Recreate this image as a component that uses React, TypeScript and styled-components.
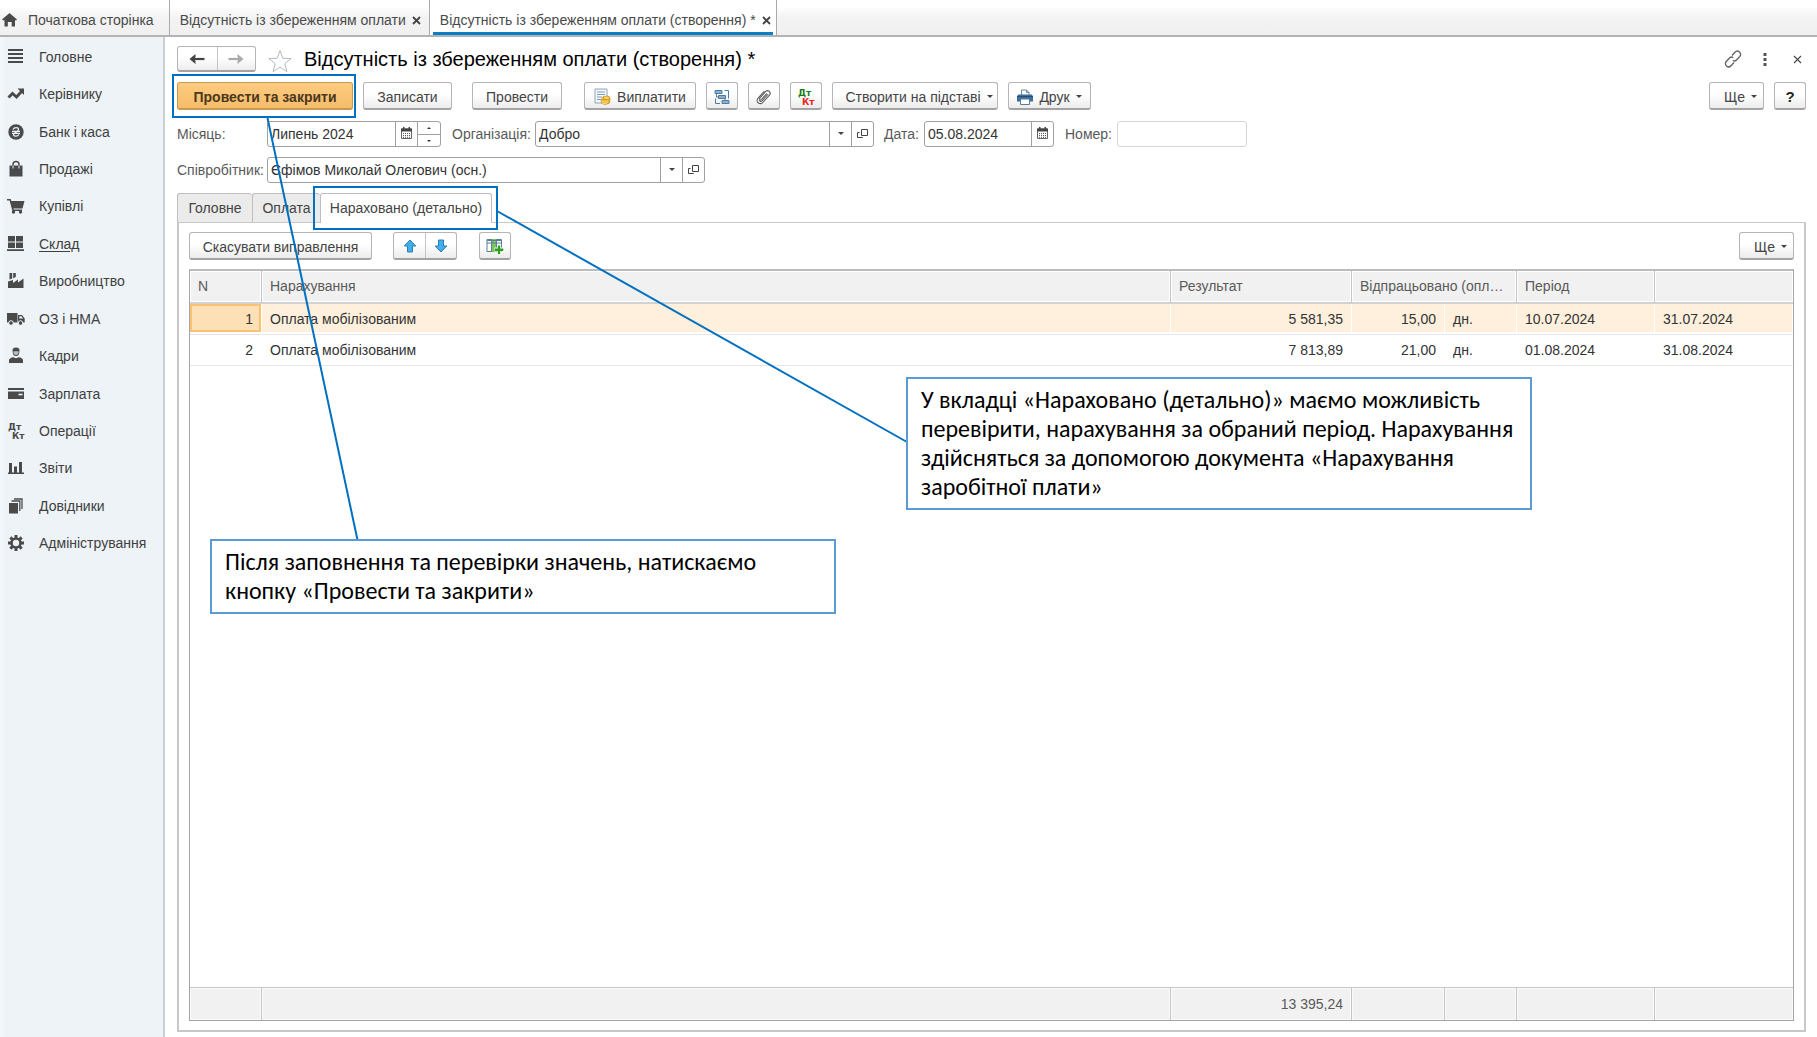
import React from 'react';
import styled, { createGlobalStyle, css } from 'styled-components';

const Global = createGlobalStyle`
  *, *::before, *::after { box-sizing: border-box; }
  body { margin: 0; background: #fff; }
  body, button, input { font-family: "Liberation Sans", Arial, sans-serif; font-size: 14px; color: #333; }
  button { margin: 0; padding: 0; cursor: pointer; }
  svg { display: block; flex: none; }
`;

const Page = styled.div`
  position: relative;
  display: flex;
  flex-direction: column;
  height: 100vh;
  min-height: 700px;
  overflow: hidden;
`;

/* ---------- window tabs ---------- */

const TabBar = styled.nav`
  display: flex;
  flex: none;
  height: 37px;
  border-bottom: 2px solid #b3b3b3;
  background: linear-gradient(#fff 6px, #f3f3f3 18px, #f0f0f0);
`;

const WindowTab = styled.div<{ $active?: boolean }>`
  display: flex;
  align-items: center;
  gap: 6px;
  padding: 5px 7px 0 10px;
  border-right: 1px solid #aaa;
  ${p => p.$active && css`
    padding-right: 4px;
    background: #fff;
    box-shadow: inset 3px 0 #fff, inset -3px 0 #fff, inset 0 -3px #0a7fc5;
  `}
`;

const HomeTab = styled(WindowTab)`
  gap: 10px;
  padding: 5px 15px 0 2px;
`;

const TabLink = styled.a`
  color: #4a4a4a;
  text-decoration: none;
  white-space: nowrap;
`;

const PlainButton = styled.button`
  display: grid;
  place-items: center;
  min-width: 10px;
  height: 20px;
  border: 0;
  background: none;
`;

/* ---------- sidebar ---------- */

const Body = styled.div`
  display: flex;
  flex: 1;
  min-height: 0;
`;

const Sidebar = styled.nav`
  flex: none;
  width: 165px;
  border-right: 2px solid #c9cfd3;
  background: linear-gradient(90deg, #f4f8fa, #edf3f7 6px);
`;

const Menu = styled.ul`
  display: grid;
  grid-auto-rows: 1fr;
  height: 525px;
  margin: 0;
  padding: 1px 0 0;
  list-style: none;
`;

const MenuLink = styled.a<{ $current?: boolean }>`
  display: flex;
  align-items: center;
  gap: 14px;
  height: 100%;
  padding-left: 7px;
  color: #404040;
  text-decoration: ${p => (p.$current ? 'underline' : 'none')};
  text-underline-offset: 2px;
`;

/* ---------- document form ---------- */

const Main = styled.main`
  display: flex;
  flex: 1;
  flex-direction: column;
  min-width: 0;
  padding: 9px 11px 5px 12px;
`;

const TitleRow = styled.header`
  display: flex;
  align-items: center;
  height: 26px;
`;

const Title = styled.h1`
  flex: 1;
  margin: 0 0 0 11px;
  color: #000;
  font-size: 20px;
  font-weight: 400;
  line-height: 26px;
`;

const HeaderTools = styled.div`
  display: grid;
  grid-template-columns: repeat(3, 18px);
  gap: 14px;
`;

const raised = css`
  border: 1px solid #b5b5b5;
  border-bottom: 2px solid #a3a3a3;
  border-radius: 3px;
  background: linear-gradient(#fff 45%, #ececec);
`;

const Button = styled.button<{ $primary?: boolean; $menu?: boolean; $width?: number; $before?: number }>`
  ${raised}
  display: flex;
  flex: none;
  align-items: center;
  justify-content: center;
  gap: 6px;
  width: ${p => p.$width ?? 32}px;
  height: 28px;
  margin-left: ${p => p.$before ?? 0}px;
  padding: 2px 0 0 ${p => (p.$menu ? 8 : 0)}px;
  color: #444;
  white-space: nowrap;
  ${p => p.$primary && css`
    border-color: #c79a52;
    background: linear-gradient(#fdcb80, #f6bd6a);
    color: #4a3820;
    font-weight: 700;
  `}
`;

const ButtonPair = styled.div<{ $before?: number; $height?: number }>`
  ${raised}
  display: grid;
  flex: none;
  grid-template-columns: 1fr 1fr;
  width: ${p => (p.$before ? 64 : 79)}px;
  height: ${p => p.$height ?? 28}px;
  margin-left: ${p => p.$before ?? 0}px;
  margin-right: ${p => (p.$before ? 0 : 11)}px;
`;

const HalfButton = styled.button`
  display: grid;
  place-items: center;
  border: 0;
  background: none;
  & + & { border-left: 1px solid #c4c4c4; }
`;

const Toolbar = styled.div`
  display: flex;
  align-items: center;
  gap: 10px;
  height: 28px;
  margin-top: 10px;
`;

const Spacer = styled.span`
  flex: 1;
`;

const HelpMark = styled.b`
  color: #222;
  font-size: 15px;
`;

const Caret = styled.span`
  width: 0;
  height: 0;
  border: 3px solid transparent;
  border-top-color: #444;
  border-bottom: 0;
`;

const FieldRow = styled.div<{ $top: number }>`
  display: flex;
  align-items: center;
  margin-top: ${p => p.$top}px;
`;

const Label = styled.label<{ $width: number }>`
  flex: none;
  width: ${p => p.$width}px;
  color: #595959;
  white-space: nowrap;
`;

const Field = styled.div<{ $width: number; $after?: number; $pale?: boolean }>`
  display: flex;
  flex: none;
  width: ${p => p.$width}px;
  height: 26px;
  margin-right: ${p => p.$after ?? 0}px;
  overflow: hidden;
  border: 1px solid ${p => (p.$pale ? '#d6d6d6' : '#a0a0a0')};
  border-radius: 3px;
  background: #fff;
`;

const TextInput = styled.input`
  flex: 1;
  min-width: 0;
  padding: 0 3px;
  border: 0;
  outline: 0;
  background: none;
`;

const FieldButton = styled.button`
  display: grid;
  flex: none;
  place-items: center;
  width: 22px;
  padding-bottom: 2px;
  border: 0;
  border-left: 1px solid #a0a0a0;
  background: none;
`;

const Spinner = styled.div`
  display: grid;
  grid-template-rows: 1fr 1fr;
  width: 23px;
  border-left: 1px solid #a0a0a0;
`;

const SpinButton = styled.button`
  display: grid;
  place-items: center;
  border: 0;
  background: none;
  & + & { border-top: 1px solid #a0a0a0; }
`;

/* ---------- page tabs and grid ---------- */

const Tabs = styled.div`
  display: flex;
  height: 29px;
  margin-top: 10px;
`;

const Tab = styled.button<{ $active?: boolean; $width: number }>`
  z-index: 1;
  width: ${p => p.$width}px;
  height: ${p => (p.$active ? 30 : 29)}px;
  padding-bottom: ${p => (p.$active ? 2 : 0)}px;
  border: 1px solid #bdbdbd;
  border-right-width: ${p => (p.$active ? 1 : 0)}px;
  border-bottom: 0;
  border-radius: 3px 3px 0 0;
  background: ${p => (p.$active ? '#fff' : '#ebebeb')};
  color: #444;
`;

const Panel = styled.section`
  display: flex;
  flex: 1;
  flex-direction: column;
  min-height: 0;
  padding: 9px 10px;
  border: 2px solid #c8c8c8;
  border-top-width: 1px;
`;

const PanelTools = styled.div`
  display: flex;
  align-items: center;
  flex: none;
`;

const GridBox = styled.div`
  flex: 1;
  min-height: 0;
  margin-top: 9px;
  border: 1px solid #a5a5a5;
  border-top: 2px solid #bcbcbc;
`;

const Grid = styled.table`
  width: 100%;
  height: 100%;
  border-spacing: 0;
  table-layout: fixed;
`;

const Head = styled.th`
  height: 33px;
  padding: 0 8px 2px;
  border-right: 1px solid #c6c6c6;
  border-bottom: 2px solid #d2d2d2;
  background: #f1f1f1;
  box-shadow: inset 0 0 0 1px #fff;
  color: #5a5a5a;
  font-weight: 400;
  text-align: left;
  white-space: nowrap;
  &:last-child { border-right: 0; }
`;

const Row = styled.tr<{ $selected?: boolean }>`
  background: ${p => (p.$selected ? '#fff0de' : '#fff')};
`;

const Cell = styled.td<{ $right?: boolean; $focus?: boolean }>`
  height: 31px;
  padding: 0 8px;
  border-right: 1px solid #fff;
  border-bottom: 1px solid #e6e6e6;
  box-shadow: inset 0 -2px #fff;
  text-align: ${p => (p.$right ? 'right' : 'left')};
  white-space: nowrap;
  ${p => p.$focus && css`
    background: #fde0b6;
    box-shadow: inset 0 -2px #fff, inset 0 -4px #f8c272, inset 0 0 0 2px #f8c272;
  `}
`;

const Filler = styled.td`
  padding: 0;
`;

const Foot = styled.td`
  height: 33px;
  padding: 0 8px;
  border-top: 1px solid #c6c6c6;
  border-right: 1px solid #c6c6c6;
  background: #f1f1f1;
  box-shadow: inset 0 0 0 1px #fafafa;
  color: #5a5a5a;
  text-align: right;
  &:last-child { border-right: 0; }
`;

/* ---------- annotations over the form ---------- */

const Lines = styled.svg`
  position: absolute;
  top: 0;
  left: 0;
  z-index: 2;
  pointer-events: none;
`;

const Frame = styled.div<{ $x: number; $y: number; $w: number; $h: number }>`
  position: absolute;
  z-index: 2;
  top: ${p => p.$y}px;
  left: ${p => p.$x}px;
  width: ${p => p.$w}px;
  height: ${p => p.$h}px;
  border: 2px solid #0070c0;
  pointer-events: none;
`;

const Callout = styled.p<{ $x: number; $y: number }>`
  position: absolute;
  z-index: 2;
  top: ${p => p.$y}px;
  left: ${p => p.$x}px;
  width: 626px;
  margin: 0;
  padding: 6px 4px 7px 13px;
  border: 2px solid #5b9bd5;
  background: #fff;
  color: #000;
  font-family: Carlito, "Noto Sans", sans-serif;
  font-size: 24px;
  line-height: 29px;
`;

/* ---------- icons ---------- */

const Ico = ({ children, size = 18, box = 18 }: { children: React.ReactNode; size?: number; box?: number }) => (
  <svg width={size} height={size} viewBox={`0 0 ${box} ${box}`} fill="#4a4a4a" aria-hidden="true">{children}</svg>
);

const DtKt = ({ top, bottom }: { top: string; bottom: string }) => (
  <svg width="18" height="18" viewBox="0 0 18 18" fontFamily="DejaVu Sans, sans-serif" fontWeight="700" fontSize="9" aria-hidden="true">
    <text x="1" y="8" fill={top}>Дт</text>
    <text x="5" y="17" fill={bottom}>Кт</text>
  </svg>
);

const icons: Record<string, React.ReactNode> = {
  menu: <Ico><path d="M1 1h15v2H1zM1 5h15v2H1zM1 9h15v2H1zM1 13h15v2H1z" /></Ico>,
  trend: <Ico><path d="M1.500 12.500l4-4 4 3.500 5-5.500" fill="none" stroke="#4a4a4a" strokeWidth="2.800" /><path d="M10.500 3.500H17V10z" /></Ico>,
  coin: <Ico><circle cx="9" cy="9" r="7.700" /><path d="M6 6.500c1-2.500 5.500-2.500 5.500 0S6.500 9.500 6.500 11.500s4 2.500 5.500 0M5 8.300h8M5 10.300h8" fill="none" stroke="#edf3f7" strokeWidth="1.200" /></Ico>,
  bag: <Ico><path d="M2.500 5.500h13v11h-13z" /><path d="M6 6V4.500a3 3 0 0 1 6 0V6" fill="none" stroke="#4a4a4a" strokeWidth="1.500" /><path d="M6 5.500v3M12 5.500v3" stroke="#edf3f7" /></Ico>,
  cart: <Ico><path d="M0 2h3.700l.6 2H17.500l-2 7.500H6.400l.3 1H15v1.500H5.400L2.600 3.500H0z" /><circle cx="6.500" cy="15" r="1.700" /><circle cx="13.500" cy="15" r="1.700" /></Ico>,
  grid: <Ico><path d="M1 1h7v5.500H1zM9 1h7v5.500H9zM1 7.500h7V13H1zM9 7.500h7V13H9zM0 14.300h17V16H0z" /></Ico>,
  factory: <Ico><path d="M1 16V9.500L6 8v3l5-3.500v3l5.500-4V16zM2.500 1h2.700v5.500L2.500 7.500zM6.200 1h2.600v4L6.200 6.200z" /></Ico>,
  truck: <Ico><path d="M0 3h10.500v9.500H0zM11 5h4l2.700 3.500v4H11z" /><circle cx="4" cy="13" r="2.300" stroke="#edf3f7" /><circle cx="13.500" cy="13" r="2.300" stroke="#edf3f7" /><path d="M12.300 6.200h2.200l1.500 2.300h-3.700z" fill="#edf3f7" /></Ico>,
  person: <Ico><path d="M5.500 3.500a3.500 3 0 0 1 7 0l-.3 2a3.200 3.500 0 0 1-6.400 0zM2 16v-2.500c0-2 2-3 4.500-3.200l2.500 1 2.500-1c2.500.2 4.500 1.200 4.500 3.200V16z" /><path d="M6.500 4.300h5v1a2.500 2.700 0 0 1-5 0z" fill="#b9bdc0" /></Ico>,
  card: <Ico><path d="M1 3h16v2H1zM1 6.500h16V14H1z" /><path d="M11.500 9.500h4" stroke="#edf3f7" strokeWidth="1.600" /></Ico>,
  dtkt: <DtKt top="#4a4a4a" bottom="#4a4a4a" />,
  chart: <Ico><path d="M1 13.500h16V15H1zM2 4h3v10H2zM7 7.500h3v6.500H7zM12 3h3v11h-3z" /></Ico>,
  books: <Ico><path d="M2 6h9v10.500H2z" /><path d="M4.500 4h8.300v10M7 2h8v10" fill="none" stroke="#4a4a4a" strokeWidth="1.300" /></Ico>,
  gear: (
    <Ico>
      <circle cx="9" cy="9" r="4.500" fill="none" stroke="#4a4a4a" strokeWidth="2.600" />
      {[0, 45, 90, 135, 180, 225, 270, 315].map(a => <path key={a} d="M7.500 1h3v3h-3z" transform={`rotate(${a} 9 9)`} />)}
    </Ico>
  ),
};

const Home = () => <Ico size={16} box={16}><path d="M7.500 1l7.500 6.500-1 1L13 8v6.500H9.700V10H5.800v4.500H2.500V8l-1 .5L0 7.500z" /></Ico>;
const Cross = ({ thin }: { thin?: boolean }) => (
  <svg width="9" height="9" viewBox="0 0 9 9" stroke="#444" strokeWidth={thin ? 1.1 : 1.8} aria-hidden="true"><path d="M1 1l7 7M8 1l-7 7" /></svg>
);
const Arrow = ({ flip, color }: { flip?: boolean; color: string }) => (
  <svg width="16" height="12" viewBox="0 0 16 12" aria-hidden="true">
    <g transform={flip ? 'rotate(180 8 6)' : undefined}><path d="M15.500 6H4" stroke={color} strokeWidth="2.200" /><path d="M.5 6L6.500 1v3L5 6l1.500 2v3z" fill={color} /></g>
  </svg>
);
const Star = () => (
  <svg width="26" height="24" viewBox="0 0 26 24" fill="#fff" stroke="#b4bac2" aria-hidden="true"><path d="M13 1.500l2.900 7.800 8.300.3-6.500 5.100 2.300 8-7-4.600-7 4.600 2.300-8L1.800 9.600l8.300-.3z" /></svg>
);
const Link = () => (
  <svg width="18" height="18" viewBox="0 0 18 18" fill="none" stroke="#666" strokeWidth="1.400" aria-hidden="true">
    <path d="M8 5.500l3-3.200a3.100 3.100 0 0 1 4.800 4.200L12.500 10a2.700 2.700 0 0 1-3.700.2M10 12.500l-3 3.200a3.100 3.100 0 0 1-4.800-4.200L5.500 8a2.700 2.700 0 0 1 3.700-.2" />
  </svg>
);
const Dots = () => <svg width="4" height="13" viewBox="0 0 4 13" fill="#555" aria-hidden="true"><path d="M.5 0h3v3h-3zM.5 5h3v3h-3zM.5 10h3v3h-3z" /></svg>;
const Calendar = () => (
  <svg width="11" height="12" viewBox="0 0 11 12" aria-hidden="true">
    <path d="M.5 2h10v9.500H.5z" fill="#fff" stroke="#666" /><path d="M0 1.500h11v3H0zM2 0h1.500v2H2zM7.500 0H9v2H7.500z" fill="#444" />
    <path d="M2 6.500h7M2 8.500h7M2 10.300h7" stroke="#555" strokeDasharray="1 1" />
  </svg>
);
const Open = () => <svg width="11" height="11" viewBox="0 0 11 11" fill="none" stroke="#444" aria-hidden="true"><path d="M4.500 1.500h6v6h-6zM2.500 4.500h-2v5h5V9" /></svg>;
const Tri = ({ up }: { up?: boolean }) => <svg width="4" height="2" viewBox="0 0 4 2" fill="#333" aria-hidden="true"><path d={up ? 'M2 0l2 2H0z' : 'M0 0h4L2 2z'} /></svg>;
const Pay = () => (
  <svg width="17" height="18" viewBox="0 0 17 18" aria-hidden="true">
    <path d="M1 1h12v14H1z" fill="#f4f8fb" stroke="#8ea5b8" /><path d="M3 4h8M3 6.500h8M3 9h5M3 11.500h4" stroke="#7f9db5" />
    <path d="M9.500 8.500h5.500l1 2-.5 4.500-4 1.500-4-1-.5-3.500z" fill="#eaae2c" stroke="#c58a1e" strokeWidth=".7" /><ellipse cx="12.500" cy="9.800" rx="3.200" ry="1.700" fill="#fbd661" stroke="#c58a1e" strokeWidth=".7" />
    <path d="M7.500 12.500c1 1.800 5 1.800 6.500 0M7.500 14.500c1 1.500 4.500 1.500 6 0" fill="none" stroke="#fbe08a" />
  </svg>
);
const Structure = () => (
  <svg width="16" height="16" viewBox="0 0 16 16" fill="#8fb0cc" stroke="#4a7ba3" aria-hidden="true">
    <path d="M1 1.500h7v3H1zM4.500 6.500h7v3h-7zM8 11.500h7v3H8z" /><path d="M10.500 1.500h4V9.500M2.500 5v3h2M11 9.500v2M1.500 9.500v5H6" fill="none" />
  </svg>
);
const Clip = () => (
  <svg width="16" height="16" viewBox="0 0 16 16" fill="none" stroke="#5a5a5a" strokeWidth="1.100" strokeLinecap="round" aria-hidden="true">
    <path d="M3.500 9.500l6-6.800a2.600 2.600 0 0 1 4 3.500L6.800 13.500a3.200 3.200 0 0 1-4.900-4.200L8 2.500M5 11l5.500-6.200M11.800 5.500L6 12a1.300 1.300 0 0 1-2-1.700" />
  </svg>
);
const Printer = () => (
  <svg width="16" height="16" viewBox="0 0 16 16" aria-hidden="true">
    <path d="M4.500 6V1h5l2.500 2.500V6" fill="#fff" stroke="#71869c" /><path d="M1.500 5.500h13L16 7v5.500H0V7z" fill="#3b6e9d" /><path d="M0 7.500h16" stroke="#244f79" />
    <path d="M3.500 10h9v5.500h-9z" fill="#fff" stroke="#5a7c9c" /><path d="M9.500 1v2.500H12" fill="none" stroke="#71869c" />
  </svg>
);
const BlueArrow = ({ down }: { down?: boolean }) => (
  <svg width="14" height="14" viewBox="0 0 14 14" fill="#43aeea" stroke="#2a7fb8" aria-hidden="true"><path transform={down ? 'rotate(180 7 7)' : undefined} d="M7 1l5.800 6H9.500v6h-5V7H1.200z" /></svg>
);
const AddColumn = () => (
  <svg width="18" height="17" viewBox="0 0 18 17" aria-hidden="true">
    <path d="M1 1.500h14.500v12H1z" fill="#fff" stroke="#5d7f96" /><path d="M6 1h4.500v13H6z" fill="#7ec35f" />
    <path d="M1 5h14.500M5.500 1.500v12M10.500 1.500v12M1 2.500h14.500" stroke="#5d7f96" fill="none" />
    <path d="M13 7v9M8.500 11.500h9" stroke="#fff" strokeWidth="4" /><path d="M13 7.500v8.500M8.800 11.700h8.500" stroke="#2f9e1f" strokeWidth="2.400" />
  </svg>
);

/* ---------- data ---------- */

const menu = [
  ['menu', 'Головне'], ['trend', 'Керівнику'], ['coin', 'Банк і каса'], ['bag', 'Продажі'], ['cart', 'Купівлі'],
  ['grid', 'Склад'], ['factory', 'Виробництво'], ['truck', 'ОЗ і НМА'], ['person', 'Кадри'], ['card', 'Зарплата'],
  ['dtkt', 'Операції'], ['chart', 'Звіти'], ['books', 'Довідники'], ['gear', 'Адміністрування'],
];

const accruals = [
  { n: 1, name: 'Оплата мобілізованим', sum: '5 581,35', days: '15,00', from: '10.07.2024', to: '31.07.2024' },
  { n: 2, name: 'Оплата мобілізованим', sum: '7 813,89', days: '21,00', from: '01.08.2024', to: '31.08.2024' },
];

export default function App() {
  return (
    <>
      <Global />
      <Page>
        <TabBar>
          <HomeTab><Home /><TabLink href="#home">Початкова сторінка</TabLink></HomeTab>
          <WindowTab>
            <TabLink href="#list">Відсутність із збереженням оплати</TabLink>
            <PlainButton aria-label="Закрити вкладку"><Cross /></PlainButton>
          </WindowTab>
          <WindowTab $active>
            <TabLink href="#doc">Відсутність із збереженням оплати (створення) *</TabLink>
            <PlainButton aria-label="Закрити вкладку"><Cross /></PlainButton>
          </WindowTab>
        </TabBar>

        <Body>
          <Sidebar>
            <Menu>
              {menu.map(([icon, text]) => (
                <li key={icon}><MenuLink href={`#${icon}`} $current={icon === 'grid'}>{icons[icon]}{text}</MenuLink></li>
              ))}
            </Menu>
          </Sidebar>

          <Main>
            <TitleRow>
              <ButtonPair $height={26}>
                <HalfButton aria-label="Назад"><Arrow color="#444" /></HalfButton>
                <HalfButton aria-label="Вперед"><Arrow flip color="#aaa" /></HalfButton>
              </ButtonPair>
              <PlainButton aria-label="Обране"><Star /></PlainButton>
              <Title>Відсутність із збереженням оплати (створення) *</Title>
              <HeaderTools>
                <PlainButton aria-label="Посилання"><Link /></PlainButton>
                <PlainButton aria-label="Меню"><Dots /></PlainButton>
                <PlainButton aria-label="Закрити"><Cross thin /></PlainButton>
              </HeaderTools>
            </TitleRow>

            <Toolbar>
              <Button $primary $width={176}>Провести та закрити</Button>
              <Button $width={89}>Записати</Button>
              <Button $width={90} $before={10}>Провести</Button>
              <Button $width={112} $before={12}><Pay />Виплатити</Button>
              <Button aria-label="Структура"><Structure /></Button>
              <Button aria-label="Файли"><Clip /></Button>
              <Button aria-label="Проводки"><DtKt top="#1c7c1c" bottom="#ee2222" /></Button>
              <Button $menu $width={166}>Створити на підставі<Caret /></Button>
              <Button $width={83}><Printer />Друк<Caret /></Button>
              <Spacer />
              <Button $menu $width={55}>Ще<Caret /></Button>
              <Button aria-label="Довідка"><HelpMark>?</HelpMark></Button>
            </Toolbar>

            <FieldRow $top={11}>
              <Label htmlFor="month" $width={90}>Місяць:</Label>
              <Field $width={174} $after={11}>
                <TextInput id="month" defaultValue="Липень 2024" />
                <FieldButton aria-label="Календар"><Calendar /></FieldButton>
                <Spinner>
                  <SpinButton aria-label="Наступний місяць"><Tri up /></SpinButton>
                  <SpinButton aria-label="Попередній місяць"><Tri /></SpinButton>
                </Spinner>
              </Field>
              <Label htmlFor="org" $width={83}>Організація:</Label>
              <Field $width={339} $after={10}>
                <TextInput id="org" defaultValue="Добро" />
                <FieldButton aria-label="Вибрати"><Caret /></FieldButton>
                <FieldButton aria-label="Відкрити"><Open /></FieldButton>
              </Field>
              <Label htmlFor="date" $width={40}>Дата:</Label>
              <Field $width={130} $after={11}>
                <TextInput id="date" defaultValue="05.08.2024" />
                <FieldButton aria-label="Календар"><Calendar /></FieldButton>
              </Field>
              <Label htmlFor="number" $width={52}>Номер:</Label>
              <Field $width={130} $pale><TextInput id="number" /></Field>
            </FieldRow>

            <FieldRow $top={10}>
              <Label htmlFor="person" $width={90}>Співробітник:</Label>
              <Field $width={438}>
                <TextInput id="person" defaultValue="Єфімов Миколай Олегович (осн.)" />
                <FieldButton aria-label="Вибрати"><Caret /></FieldButton>
                <FieldButton aria-label="Відкрити"><Open /></FieldButton>
              </Field>
            </FieldRow>

            <Tabs role="tablist">
              <Tab role="tab" $width={75}>Головне</Tab>
              <Tab role="tab" $width={68}>Оплата</Tab>
              <Tab role="tab" aria-selected $active $width={172}>Нараховано (детально)</Tab>
            </Tabs>

            <Panel>
              <PanelTools>
                <Button $width={183}>Скасувати виправлення</Button>
                <ButtonPair $before={21}>
                  <HalfButton aria-label="Вгору"><BlueArrow /></HalfButton>
                  <HalfButton aria-label="Вниз"><BlueArrow down /></HalfButton>
                </ButtonPair>
                <Button $before={22} aria-label="Додати колонку"><AddColumn /></Button>
                <Spacer />
                <Button $menu $width={55}>Ще<Caret /></Button>
              </PanelTools>

              <GridBox>
                <Grid>
                  <colgroup>
                    <col width="72" /><col /><col width="181" /><col width="93" /><col width="72" /><col width="138" /><col width="138" />
                  </colgroup>
                  <thead>
                    <tr>
                      <Head>N</Head><Head>Нарахування</Head><Head>Результат</Head>
                      <Head colSpan={2}>Відпрацьовано (опл…</Head><Head>Період</Head><Head />
                    </tr>
                  </thead>
                  <tbody>
                    {accruals.map((a, i) => (
                      <Row key={a.n} $selected={i === 0}>
                        <Cell $right $focus={i === 0}>{a.n}</Cell>
                        <Cell>{a.name}</Cell>
                        <Cell $right>{a.sum}</Cell>
                        <Cell $right>{a.days}</Cell>
                        <Cell>дн.</Cell>
                        <Cell>{a.from}</Cell>
                        <Cell>{a.to}</Cell>
                      </Row>
                    ))}
                    <tr><Filler colSpan={7} /></tr>
                  </tbody>
                  <tfoot>
                    <tr><Foot /><Foot /><Foot>13 395,24</Foot><Foot /><Foot /><Foot /><Foot /></tr>
                  </tfoot>
                </Grid>
              </GridBox>
            </Panel>
          </Main>
        </Body>

        <Frame $x={172} $y={74} $w={184} $h={44} />
        <Frame $x={313} $y={186} $w={185} $h={44} />
        <Lines width="920" height="560" viewBox="0 0 920 560" stroke="#0070c0" strokeWidth="2" aria-hidden="true">
          <path d="M267.500 118L357.500 540M497 211L907 442" />
        </Lines>
        <Callout $x={906} $y={377}>
          У вкладці «Нараховано (детально)» маємо можливість<br />
          перевірити, нарахування за обраний період. Нарахування<br />
          здійсняться за допомогою документа «Нарахування<br />
          заробітної плати»
        </Callout>
        <Callout $x={210} $y={539}>
          Після заповнення та перевірки значень, натискаємо<br />
          кнопку «Провести та закрити»
        </Callout>
      </Page>
    </>
  );
}
